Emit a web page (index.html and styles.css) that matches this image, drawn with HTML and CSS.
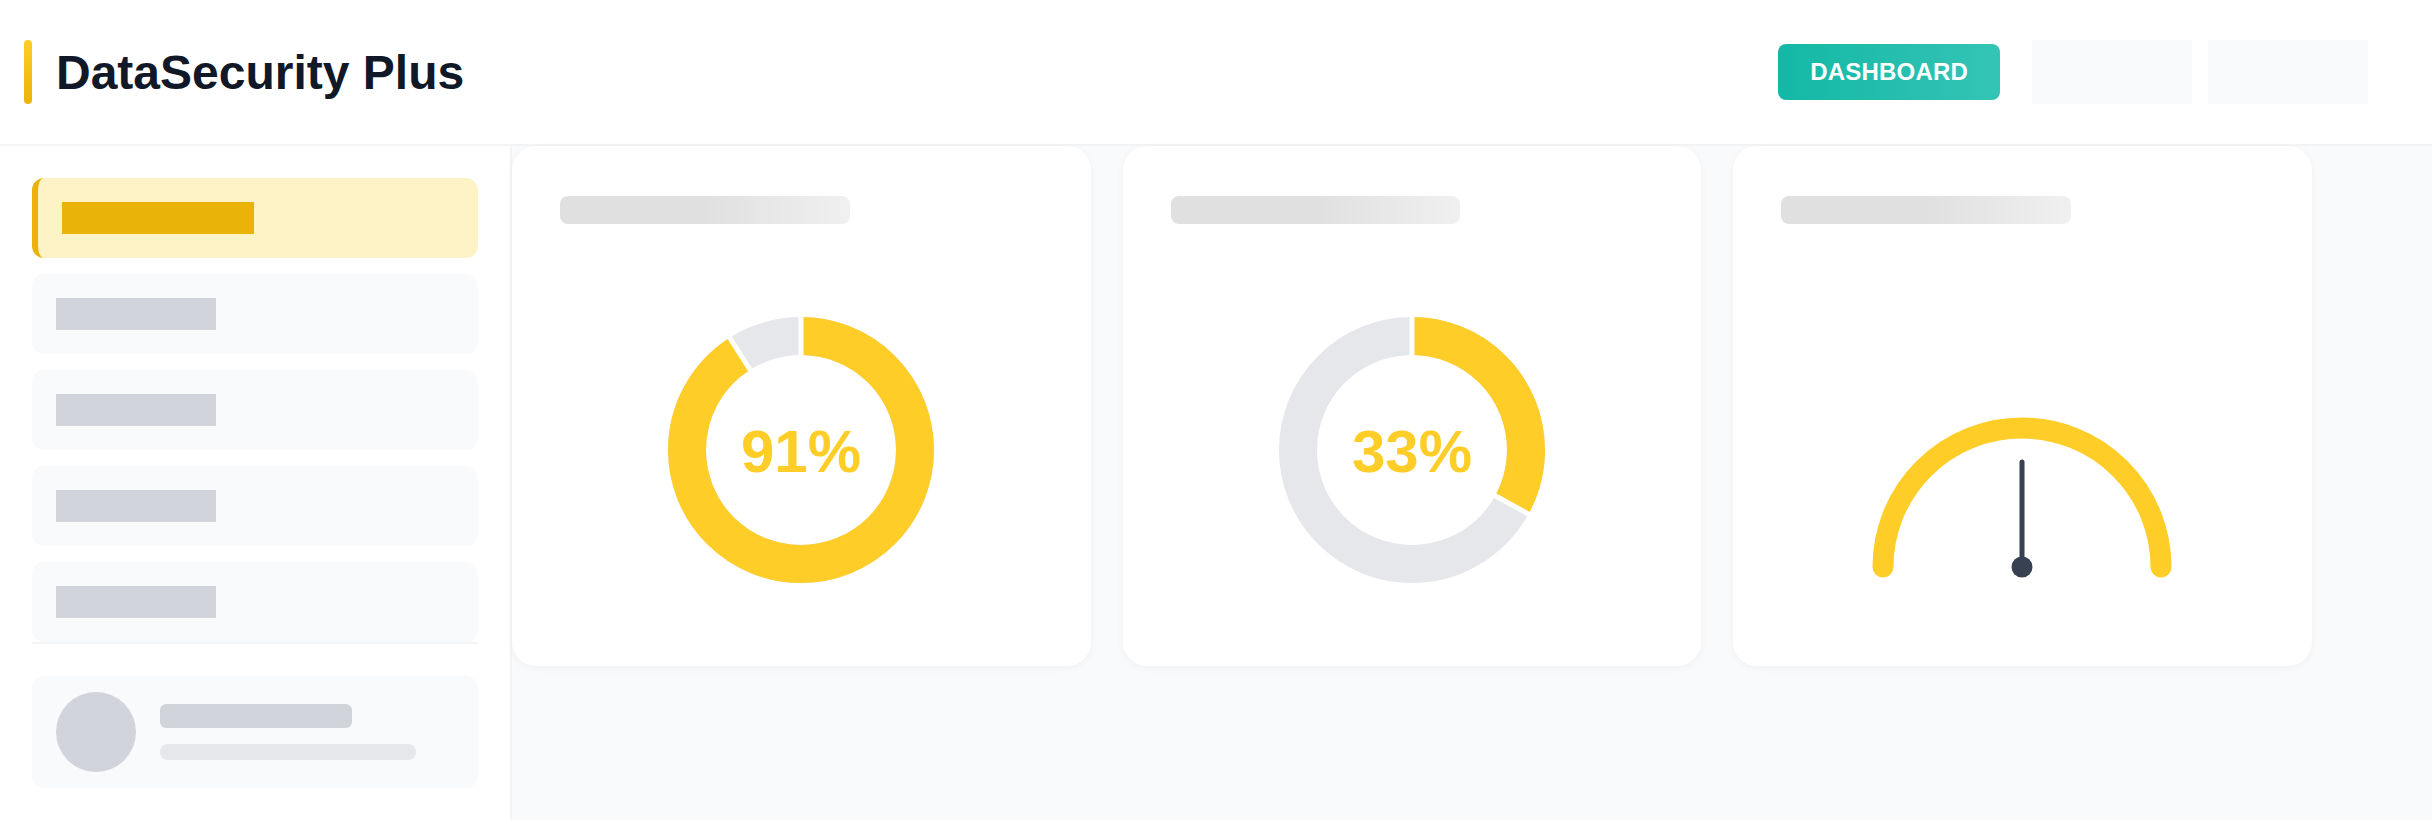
FILE: index.html
```html
<!DOCTYPE html>
<html lang="en">
<head>
    <meta charset="UTF-8">
    <meta name="viewport" content="width=device-width, initial-scale=1.0">
    <title>DataSecurity Plus</title>
    <link rel="stylesheet" href="styles.css">
</head>
<body>
    <header class="header">
        <div class="brand">
            <span class="brand-bar"></span>
            <h1 class="brand-title">DataSecurity Plus</h1>
        </div>
        <div class="header-actions">
            <button class="btn-primary">DASHBOARD</button>
            <div class="header-slot"></div>
            <div class="header-slot"></div>
        </div>
    </header>

    <div class="layout">
        <aside class="sidebar">
            <nav class="nav">
                <div class="nav-item active"><span class="nav-skel"></span></div>
                <div class="nav-item"><span class="nav-skel"></span></div>
                <div class="nav-item"><span class="nav-skel"></span></div>
                <div class="nav-item"><span class="nav-skel"></span></div>
                <div class="nav-item"><span class="nav-skel"></span></div>
            </nav>
            <div class="user-card">
                <div class="avatar"></div>
                <div class="user-lines">
                    <span class="user-name"></span>
                    <span class="user-meta"></span>
                </div>
            </div>
        </aside>

        <main class="main">
            <!-- 91% donut -->
            <section class="card">
                <div class="card-title"></div>
                <div class="chart">
                    <svg class="chart-svg" viewBox="0 0 300 300">
                        <circle class="ring-track" cx="150" cy="150" r="114"/>
                        <circle class="ring-value" cx="150" cy="150" r="114"
                                stroke-dasharray="651.8 716.3" transform="rotate(-90 150 150)"/>
                        <line class="ring-gap" x1="150" y1="150" x2="150" y2="10"/>
                        <line class="ring-gap" x1="150" y1="150" x2="150" y2="10" transform="rotate(327.6 150 150)"/>
                        <text class="ring-label" x="150" y="171.5">91%</text>
                    </svg>
                </div>
            </section>

            <!-- 33% donut -->
            <section class="card">
                <div class="card-title"></div>
                <div class="chart">
                    <svg class="chart-svg" viewBox="0 0 300 300">
                        <circle class="ring-track" cx="150" cy="150" r="114"/>
                        <circle class="ring-value" cx="150" cy="150" r="114"
                                stroke-dasharray="236.4 716.3" transform="rotate(-90 150 150)"/>
                        <line class="ring-gap" x1="150" y1="150" x2="150" y2="10"/>
                        <line class="ring-gap" x1="150" y1="150" x2="150" y2="10" transform="rotate(118.8 150 150)"/>
                        <text class="ring-label" x="150" y="171.5">33%</text>
                    </svg>
                </div>
            </section>

            <!-- gauge -->
            <section class="card">
                <div class="card-title"></div>
                <div class="chart">
                    <svg class="chart-svg" viewBox="0 0 300 300">
                        <path class="gauge-arc" d="M 11 267 A 139 139 0 0 1 289 267"/>
                        <line class="gauge-needle" x1="150" y1="162" x2="150" y2="267"/>
                        <circle class="gauge-knob" cx="150" cy="267" r="10.5"/>
                    </svg>
                </div>
            </section>
        </main>
    </div>
</body>
</html>
```

FILE: styles.css
```css
* {
    margin: 0;
    padding: 0;
    box-sizing: border-box;
}

body {
    font-family: 'Liberation Sans', Arial, sans-serif;
    background: #ffffff;
    color: #111827;
    height: 100vh;
    overflow: hidden;
}

.header {
    height: 146px;
    display: flex;
    align-items: center;
    padding: 0 64px 0 24px;
    border-bottom: 2px solid #f3f4f6;
    background: #ffffff;
}

.brand {
    display: flex;
    align-items: center;
    gap: 24px;
}

.brand-bar {
    width: 8px;
    height: 64px;
    border-radius: 4px;
    background: linear-gradient(180deg, #fecd27, #eab308);
}

.brand-title {
    font-size: 48px;
    font-weight: 700;
    color: #111827;
}

.header-actions {
    margin-left: auto;
    display: flex;
    align-items: center;
    gap: 16px;
}

.btn-primary {
    height: 56px;
    padding: 0 32px;
    margin-right: 16px;
    border: none;
    border-radius: 8px;
    background: linear-gradient(90deg, #14b8a6, #34c4b5);
    color: #ffffff;
    font-family: inherit;
    font-size: 24px;
    font-weight: 700;
    letter-spacing: 0.2px;
}

.header-slot {
    width: 160px;
    height: 64px;
    background: #f9fafb;
}

.layout {
    display: flex;
    height: calc(100vh - 146px);
}

.sidebar {
    width: 512px;
    flex-shrink: 0;
    padding: 32px;
    border-right: 2px solid #f3f4f6;
    background: #ffffff;
}

.nav {
    display: flex;
    flex-direction: column;
    gap: 16px;
    border-bottom: 2px solid #f3f4f6;
}

.nav-item {
    height: 80px;
    padding: 24px;
    border-radius: 12px;
    background: #f9fafb;
}

.nav-skel {
    display: block;
    width: 160px;
    height: 32px;
    background: #d1d5db;
}

.nav-item.active {
    background: #fef3c7;
    border-left: 6px solid #eab308;
}

.nav-item.active .nav-skel {
    width: 192px;
    background: #eab308;
}

.user-card {
    margin-top: 32px;
    display: flex;
    align-items: center;
    gap: 24px;
    padding: 16px 24px;
    border-radius: 12px;
    background: #f9fafb;
}

.avatar {
    width: 80px;
    height: 80px;
    border-radius: 50%;
    background: #d1d5db;
}

.user-lines {
    display: flex;
    flex-direction: column;
    gap: 16px;
}

.user-name {
    width: 192px;
    height: 24px;
    border-radius: 6px;
    background: #d1d5db;
}

.user-meta {
    width: 256px;
    height: 16px;
    border-radius: 8px;
    background: #e5e7eb;
}

.main {
    flex: 1;
    background: #f9fafb;
    display: grid;
    grid-template-columns: repeat(3, 578.5px);
    gap: 32px;
    align-content: start;
}

.card {
    height: 520px;
    padding: 50px 48px 48px;
    display: flex;
    flex-direction: column;
    background: #ffffff;
    border-radius: 24px;
    box-shadow: 0 2px 8px rgba(0, 0, 0, 0.04);
}

.card-title {
    width: 60%;
    height: 28px;
    border-radius: 8px;
    background: linear-gradient(90deg, #e0e0e0 0%, #e0e0e0 50%, #f0f0f0 100%);
}

.chart {
    flex: 1;
    padding-top: 58px;
    display: flex;
    align-items: center;
    justify-content: center;
}

.chart-svg {
    width: 300px;
    height: 300px;
}

.ring-track {
    fill: none;
    stroke: #e5e7eb;
    stroke-width: 38;
}

.ring-value {
    fill: none;
    stroke: #fecd27;
    stroke-width: 38;
}

.ring-gap {
    stroke: #ffffff;
    stroke-width: 5;
}

.ring-label {
    fill: #fecd27;
    font-family: 'Liberation Sans', Arial, sans-serif;
    font-size: 60px;
    font-weight: 700;
    text-anchor: middle;
}

.gauge-arc {
    fill: none;
    stroke: #fecd27;
    stroke-width: 21;
    stroke-linecap: round;
}

.gauge-needle {
    stroke: #374151;
    stroke-width: 5;
    stroke-linecap: round;
}

.gauge-knob {
    fill: #374151;
}
```
